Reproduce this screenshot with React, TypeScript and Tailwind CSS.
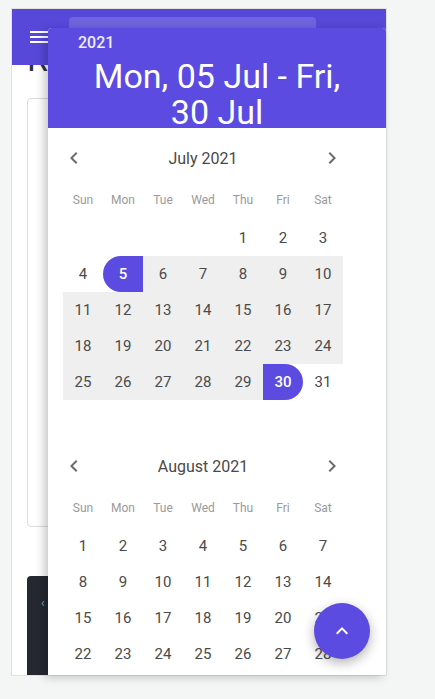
import React from "react";

const WEEK = ["Sun", "Mon", "Tue", "Wed", "Thu", "Fri", "Sat"];

function Chevron({ dir }: { dir: "left" | "right" }) {
  return (
    <svg width="24" height="24" viewBox="0 0 24 24" className="text-[#6b6b6b]">
      {dir === "left" ? (
        <path d="M15.41 7.41 14 6l-6 6 6 6 1.41-1.41L10.83 12z" fill="currentColor" />
      ) : (
        <path d="M10 6 8.59 7.41 13.17 12l-4.58 4.59L10 18l6-6z" fill="currentColor" />
      )}
    </svg>
  );
}

type Cell = { d: number | null; range?: boolean; start?: boolean; end?: boolean };

function buildMonth(offset: number, days: number, rs?: number, re?: number): Cell[][] {
  const cells: Cell[] = [];
  for (let i = 0; i < offset; i++) cells.push({ d: null });
  for (let d = 1; d <= days; d++) {
    const inRange = rs !== undefined && re !== undefined && d >= rs && d <= re;
    cells.push({ d, range: inRange, start: d === rs, end: d === re });
  }
  while (cells.length < 42) cells.push({ d: null });
  const rows: Cell[][] = [];
  for (let r = 0; r < 6; r++) rows.push(cells.slice(r * 7, r * 7 + 7));
  return rows;
}

function Month({ title, rows }: { title: string; rows: Cell[][] }) {
  return (
    <div className="mt-[6px] w-[310px] px-[15px]">
      <div className="h-[48px] flex items-center justify-between">
        <div className="-ml-[1px]">
          <Chevron dir="left" />
        </div>
        <div className="text-[16px] text-[#4a4a4a] pt-[2px]">{title}</div>
        <div className="-mr-[1px]">
          <Chevron dir="right" />
        </div>
      </div>
      <div className="grid grid-cols-7 h-[36px] items-center">
        {WEEK.map((w) => (
          <div key={w} className="text-center text-[12px] text-[#9a9a9a]">
            {w}
          </div>
        ))}
      </div>
      <div className="mt-[2px] flex flex-col">
        {rows.map((row, ri) => (
          <div key={ri} className="grid grid-cols-7 h-[36px]">
            {row.map((c, ci) => {
              let cls = "flex items-center justify-center text-[15px] text-[#4a4a4a]";
              if (c.d !== null && c.range) cls += " bg-[#efefef]";
              if (c.start)
                cls =
                  "flex items-center justify-center text-[15px] font-medium text-white bg-[#5b4be0] rounded-l-full";
              if (c.end)
                cls =
                  "flex items-center justify-center text-[15px] font-medium text-white bg-[#5b4be0] rounded-r-full";
              return (
                <div key={ci} className={cls}>
                  {c.d ?? ""}
                </div>
              );
            })}
          </div>
        ))}
      </div>
    </div>
  );
}

export default function App() {
  const july = buildMonth(4, 31, 5, 30);
  const aug = buildMonth(0, 31);
  return (
    <div
      className="relative w-[435px] h-[699px] overflow-hidden bg-[#f4f5f5] pl-[11px] pt-[8px]"
      style={{ fontFamily: "Roboto, 'Noto Sans', sans-serif" }}
    >
      {/* background page */}
      <div className="w-[376px] h-[668px] bg-white border border-[#e2e2e2] overflow-hidden flex flex-col">
        <div className="relative z-10 h-[56px] shrink-0 bg-[#5848da] flex items-center">
          <svg width="24" height="24" viewBox="0 0 24 24" className="ml-[15px] text-white">
            <path d="M3 18h18v-2H3v2zm0-5h18v-2H3v2zm0-7v2h18V6H3z" fill="currentColor" />
          </svg>
          <div className="ml-[18px] w-[247px] h-[40px] rounded-[4px] bg-white/15" />
          <svg width="24" height="24" viewBox="0 0 24 24" className="ml-[17px] text-white">
            <path
              d="M12 12c2.21 0 4-1.79 4-4s-1.79-4-4-4-4 1.79-4 4 1.79 4 4 4zm0 2c-2.67 0-8 1.34-8 4v2h16v-2c0-2.66-5.33-4-8-4z"
              fill="currentColor"
            />
          </svg>
        </div>
        <div className="px-[15px] flex flex-col">
          <div className="-mt-[26px] h-[40px] leading-[40px] text-[34px] text-[#2f3136]">Reports</div>
          <div className="mt-[19px] h-[429px] rounded-[4px] border border-[#dcdcdc] bg-white" />
          <div className="mt-[49px] h-[120px] rounded-tl-[4px] bg-[#252830] pl-[14px] pt-[14px]">
            <span className="text-[12px] text-[#7fa7c9]">‹</span>
          </div>
        </div>
      </div>

      {/* date range dialog */}
      <div className="absolute z-20 left-[48px] top-[28px] w-[338px] h-[647px] bg-white rounded-t-[4px] overflow-hidden shadow-[-4px_2px_10px_rgba(0,0,0,0.22)] flex flex-col">
        <div className="h-[100px] shrink-0 bg-[#5b4be0] text-white flex flex-col">
          <div className="mt-[5px] ml-[30px] h-[20px] leading-[20px] text-[16px] font-medium text-white/90">
            2021
          </div>
          <div className="mt-[5px] px-[30px] text-center text-[34px] leading-[36px]">
            Mon, 05 Jul - Fri, 30 Jul
          </div>
        </div>
        <div className="flex flex-col">
          <Month title="July 2021" rows={july} />
          <Month title="August 2021" rows={aug} />
        </div>
      </div>

      {/* FAB */}
      <button className="absolute z-30 left-[314px] top-[603px] w-[56px] h-[56px] rounded-full bg-[#5b4be0] shadow-[0_4px_12px_rgba(0,0,0,0.3)] flex items-center justify-center">
        <svg width="24" height="24" viewBox="0 0 24 24" className="text-white">
          <path d="M7.41 15.41 12 10.83l4.59 4.58L18 14l-6-6-6 6z" fill="currentColor" />
        </svg>
      </button>
    </div>
  );
}
